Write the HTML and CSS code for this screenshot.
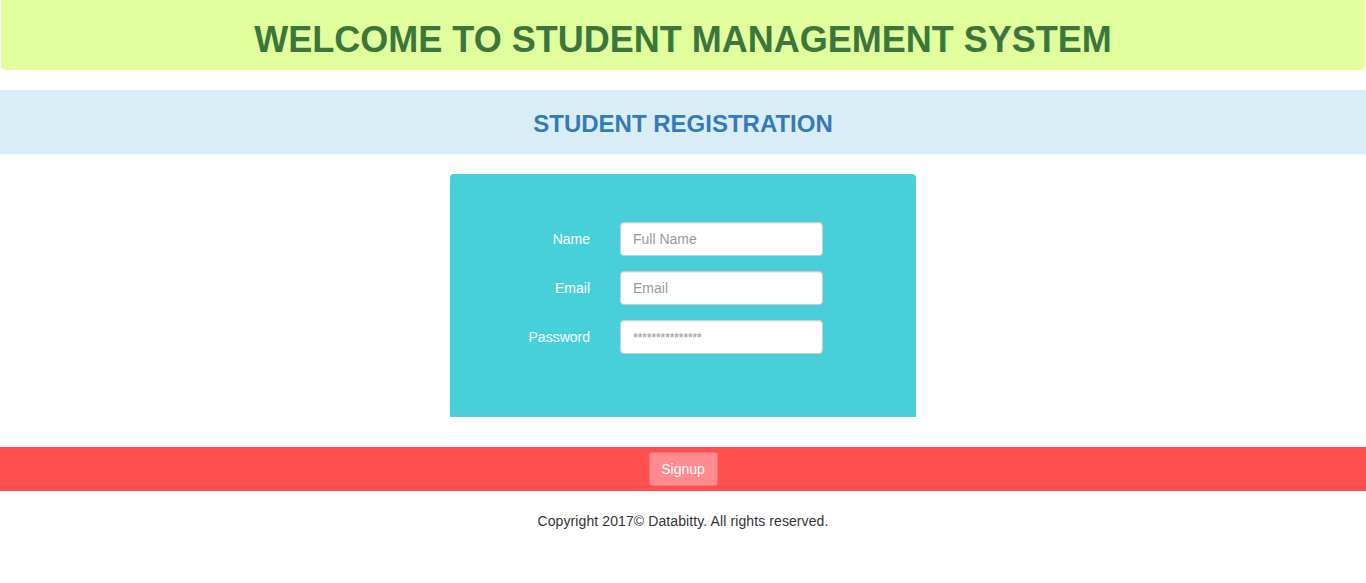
FILE: index.html
```html
<!DOCTYPE html>
<html>
<head>
<meta charset="utf-8">
<title>Student Management System</title>
<link rel="stylesheet" href="styles.css">
</head>
<body>
<header class="welcome">
  <h1>WELCOME TO STUDENT MANAGEMENT SYSTEM</h1>
</header>
<section class="band">
  <h2>STUDENT REGISTRATION</h2>
</section>
<main class="form-wrap">
  <form class="reg-form">
    <label class="lbl" for="name">Name</label>
    <input class="field" id="name" type="text" placeholder="Full Name">
    <label class="lbl" for="email">Email</label>
    <input class="field" id="email" type="text" placeholder="Email">
    <label class="lbl" for="pw">Password</label>
    <input class="field pw" id="pw" type="text" placeholder="***************">
  </form>
</main>
<div class="action-bar">
  <button class="signup" type="button">Signup</button>
</div>
<footer class="footer">Copyright 2017© Databitty. All rights reserved.</footer>
</body>
</html>
```
FILE: styles.css
```css
* { box-sizing: border-box; }
html, body { margin: 0; padding: 0; }
body {
  font-family: "Liberation Sans", Arial, sans-serif;
  font-size: 14px;
  color: #333;
  background: #fff;
}
.welcome {
  margin: 0 1px;
  height: 70px;
  background: #e1ff9c;
  border-radius: 0 0 5px 5px;
  display: flex;
  align-items: center;
  justify-content: center;
}
.welcome h1 {
  margin: 0;
  padding-top: 10px;
  font-size: 36px;
  font-weight: bold;
  color: #3c763d;
}
.band {
  margin-top: 20px;
  height: 64px;
  background: #d9edf7;
  display: flex;
  align-items: center;
  justify-content: center;
}
.band h2 {
  margin: 0;
  padding-top: 3px;
  font-size: 24px;
  font-weight: bold;
  color: #337ab7;
}
.form-wrap {
  display: flex;
  justify-content: center;
  margin-top: 20px;
}
.reg-form {
  width: 466px;
  height: 243px;
  background: #47cfda;
  border-radius: 4px 4px 0 0;
  padding-top: 48px;
  display: grid;
  grid-template-columns: 140px 203px;
  grid-auto-rows: 34px;
  column-gap: 30px;
  row-gap: 15px;
  align-content: start;
}
.lbl {
  color: #fff;
  text-align: right;
  align-self: center;
  font-size: 14px;
}
.field {
  height: 34px;
  width: 203px;
  border: 1px solid #ccc;
  border-radius: 4px;
  padding: 6px 12px;
  font-family: "Liberation Sans", Arial, sans-serif;
  font-size: 14px;
  color: #555;
  background: #fff;
  box-shadow: inset 0 1px 1px rgba(0,0,0,.075);
}
.field::placeholder { color: #999; }
.pw::placeholder { font-size: 13px; letter-spacing: -0.5px; }
.action-bar {
  margin-top: 30px;
  height: 44px;
  background: #ff4f4f;
  display: flex;
  align-items: center;
  justify-content: center;
}
.signup {
  width: 69px;
  height: 34px;
  border: 1px solid #ff6f73;
  border-radius: 3px;
  background: #ff8b8f;
  color: #fff;
  font-family: "Liberation Sans", Arial, sans-serif;
  font-size: 14px;
  padding: 0;
}
.footer {
  text-align: center;
  padding-top: 22px;
  font-size: 14px;
  letter-spacing: 0.1px;
  color: #333;
}
```
